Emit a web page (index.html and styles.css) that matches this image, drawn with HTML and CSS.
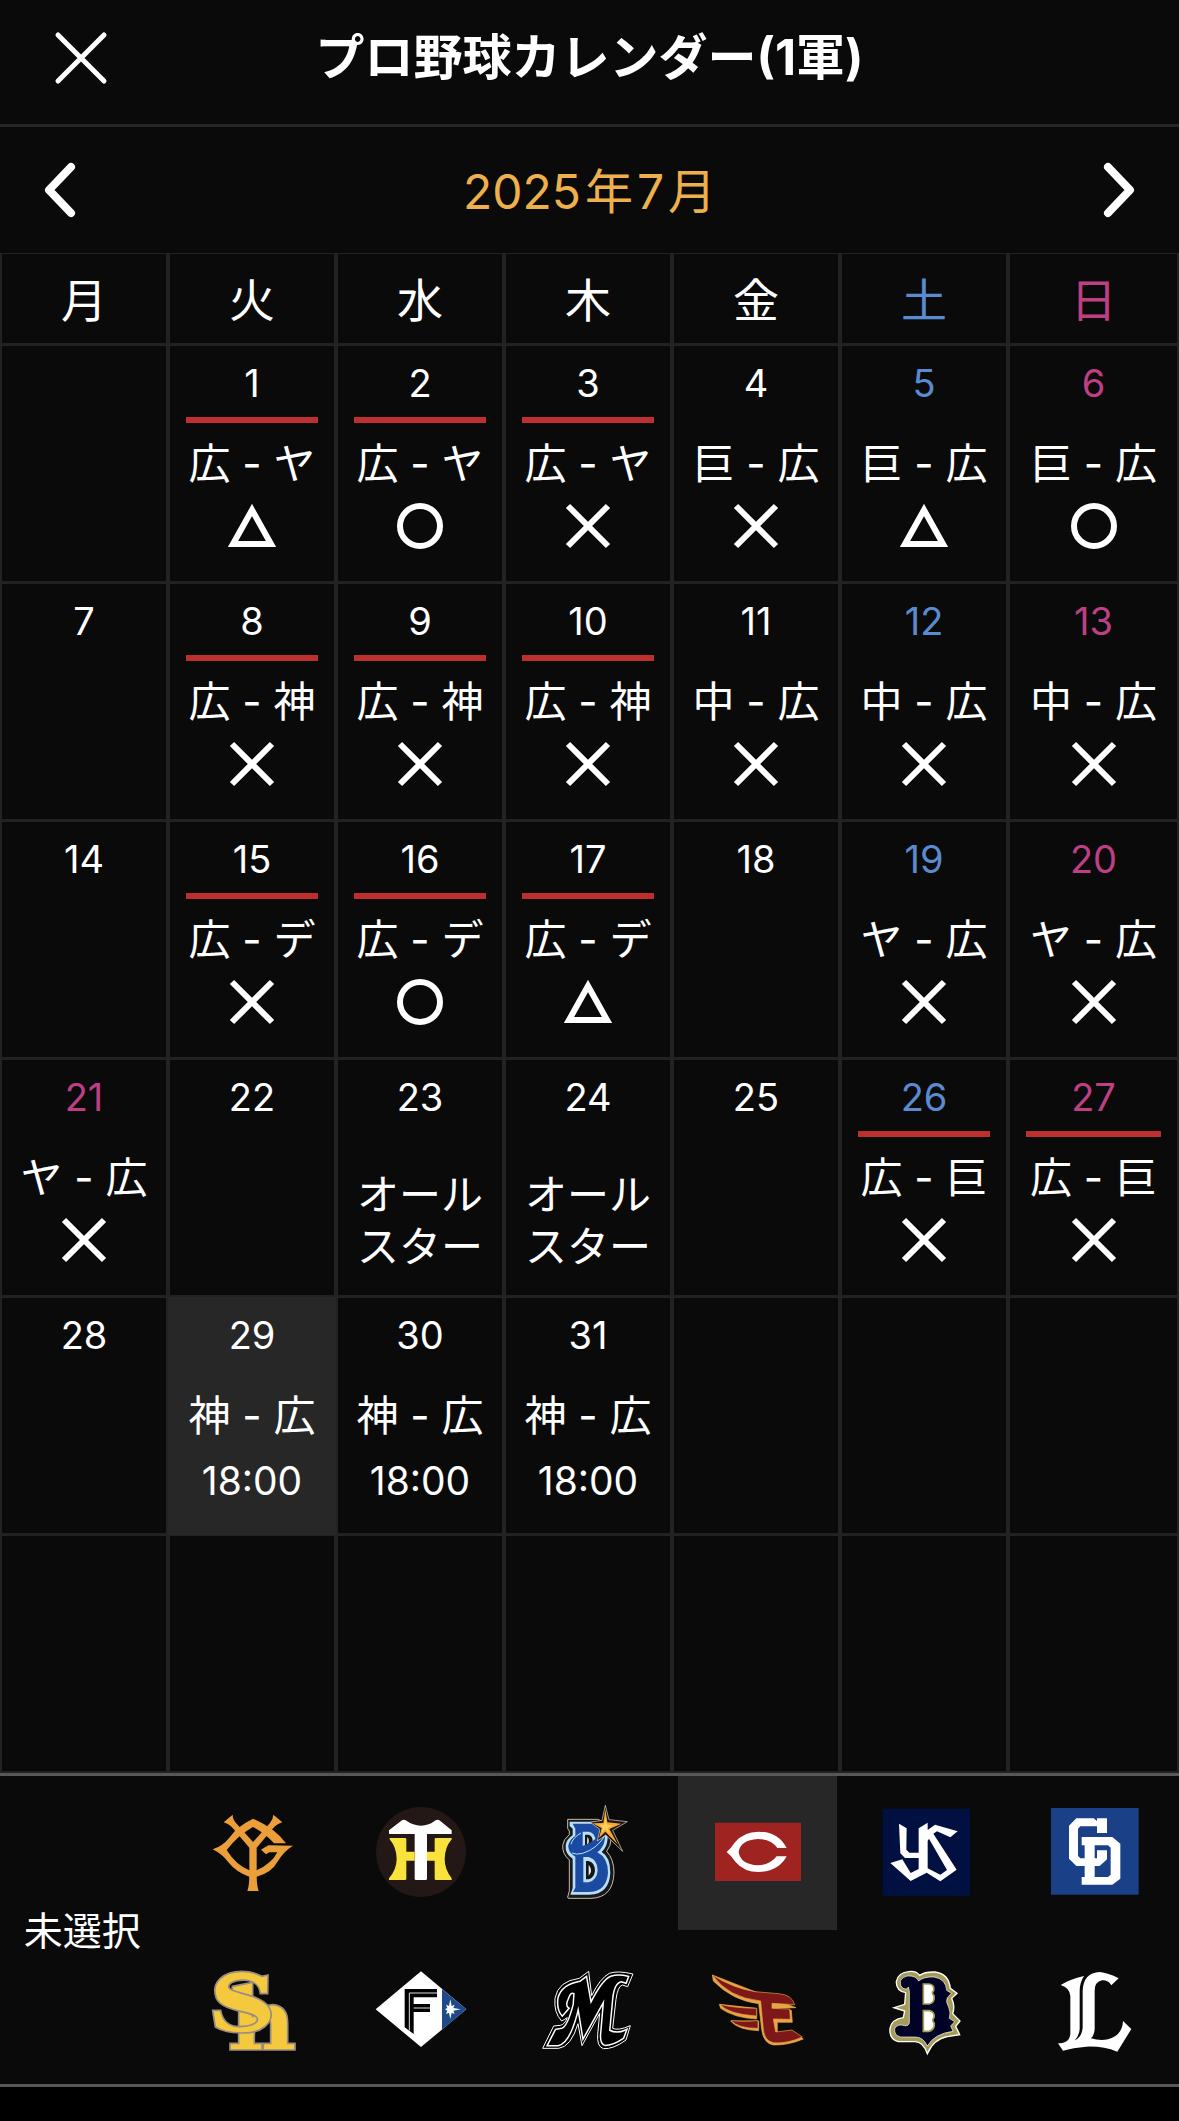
FILE: index.html
```html
<!DOCTYPE html>
<html lang="ja">
<head>
  <meta charset="UTF-8" />
  <meta name="viewport" content="width=device-width, initial-scale=1.0" />
  <title>プロ野球カレンダー(1軍)</title>
  <link rel="stylesheet" href="styles.css">
</head>
<body>
  <!-- result marks used in the calendar -->
  <svg class="defs" aria-hidden="true">
    <symbol id="win" viewBox="0 0 48 48"><circle cx="24" cy="24" r="20" /></symbol>
    <symbol id="lose" viewBox="0 0 48 48"><path d="M4 4L44 44M44 4L4 44" /></symbol>
    <symbol id="draw" viewBox="0 0 48 48"><path d="M24 8L43 42H5Z" /></symbol>
  </svg>

  <header class="header">
    <button class="icon-btn" type="button" aria-label="閉じる">
      <svg width="56" height="56" viewBox="0 0 56 56"><path d="M5 5L51 51M51 5L5 51" stroke-width="5" /></svg>
    </button>
    <h1>プロ野球カレンダー(1軍)</h1>
  </header>

  <nav class="month-nav">
    <button class="icon-btn" type="button" aria-label="前の月">
      <svg width="40" height="56" viewBox="0 0 40 56"><path d="M31 5L9 28L31 51" stroke-width="8" /></svg>
    </button>
    <h2><span>2025</span><span>年</span><span>7</span><span>月</span></h2>
    <button class="icon-btn" type="button" aria-label="次の月">
      <svg width="40" height="56" viewBox="0 0 40 56"><path d="M9 5L31 28L9 51" stroke-width="8" /></svg>
    </button>
  </nav>

  <main>
    <table class="calendar">
      <thead>
        <tr>
          <th>月</th><th>火</th><th>水</th><th>木</th><th>金</th>
          <th class="sat">土</th><th class="sun">日</th>
        </tr>
      </thead>
      <tbody>
        <tr>
          <td></td>
          <td><div class="date home">1</div><div class="match">広 - ヤ</div><svg class="mark"><use href="#draw" /></svg></td>
          <td><div class="date home">2</div><div class="match">広 - ヤ</div><svg class="mark"><use href="#win" /></svg></td>
          <td><div class="date home">3</div><div class="match">広 - ヤ</div><svg class="mark"><use href="#lose" /></svg></td>
          <td><div class="date">4</div><div class="match">巨 - 広</div><svg class="mark"><use href="#lose" /></svg></td>
          <td><div class="date sat">5</div><div class="match">巨 - 広</div><svg class="mark"><use href="#draw" /></svg></td>
          <td><div class="date sun">6</div><div class="match">巨 - 広</div><svg class="mark"><use href="#win" /></svg></td>
        </tr>
        <tr>
          <td><div class="date">7</div></td>
          <td><div class="date home">8</div><div class="match">広 - 神</div><svg class="mark"><use href="#lose" /></svg></td>
          <td><div class="date home">9</div><div class="match">広 - 神</div><svg class="mark"><use href="#lose" /></svg></td>
          <td><div class="date home">10</div><div class="match">広 - 神</div><svg class="mark"><use href="#lose" /></svg></td>
          <td><div class="date">11</div><div class="match">中 - 広</div><svg class="mark"><use href="#lose" /></svg></td>
          <td><div class="date sat">12</div><div class="match">中 - 広</div><svg class="mark"><use href="#lose" /></svg></td>
          <td><div class="date sun">13</div><div class="match">中 - 広</div><svg class="mark"><use href="#lose" /></svg></td>
        </tr>
        <tr>
          <td><div class="date">14</div></td>
          <td><div class="date home">15</div><div class="match">広 - デ</div><svg class="mark"><use href="#lose" /></svg></td>
          <td><div class="date home">16</div><div class="match">広 - デ</div><svg class="mark"><use href="#win" /></svg></td>
          <td><div class="date home">17</div><div class="match">広 - デ</div><svg class="mark"><use href="#draw" /></svg></td>
          <td><div class="date">18</div></td>
          <td><div class="date sat">19</div><div class="match">ヤ - 広</div><svg class="mark"><use href="#lose" /></svg></td>
          <td><div class="date sun">20</div><div class="match">ヤ - 広</div><svg class="mark"><use href="#lose" /></svg></td>
        </tr>
        <tr>
          <td><div class="date sun">21</div><div class="match">ヤ - 広</div><svg class="mark"><use href="#lose" /></svg></td>
          <td><div class="date">22</div></td>
          <td><div class="date">23</div><div class="event">オール<br>スター</div></td>
          <td><div class="date">24</div><div class="event">オール<br>スター</div></td>
          <td><div class="date">25</div></td>
          <td><div class="date sat home">26</div><div class="match">広 - 巨</div><svg class="mark"><use href="#lose" /></svg></td>
          <td><div class="date sun home">27</div><div class="match">広 - 巨</div><svg class="mark"><use href="#lose" /></svg></td>
        </tr>
        <tr>
          <td><div class="date">28</div></td>
          <td class="today"><div class="date">29</div><div class="match">神 - 広</div><div class="time">18:00</div></td>
          <td><div class="date">30</div><div class="match">神 - 広</div><div class="time">18:00</div></td>
          <td><div class="date">31</div><div class="match">神 - 広</div><div class="time">18:00</div></td>
          <td></td>
          <td></td>
          <td></td>
        </tr>
        <tr>
          <td></td><td></td><td></td><td></td><td></td><td></td><td></td>
        </tr>
      </tbody>
    </table>
  </main>

  <footer class="teams">
    <button class="none" type="button">未選択</button>

    <button type="button" aria-label="巨人">
      <svg viewBox="24 51 270 270" fill="#eb9f3b">
        <path d="M71 94L98 71Q98 85 108 96L159 153L210 96Q219 85 220 71L247 94Q232 98 218 113L170 170V250Q170 285 176 300H142Q148 285 148 250V170L100 113Q86 98 71 94Z" />
        <path d="M159 83Q110 107 88 140Q68 165 38 175Q68 190 85 214Q110 245 148 257H170Q215 245 232 213Q252 180 279 164L205 163L183 176L198 190L208 184H232Q215 218 170 238H148Q108 222 80 177Q115 132 159 108Q195 127 222 157H258Q225 112 159 83Z" />
      </svg>
    </button>
    <button type="button" aria-label="阪神">
      <svg viewBox="19 51 270 270">
        <circle cx="154" cy="183" r="135" fill="#231815" />
        <path fill="#fff" d="M108 88Q130 104 154 104Q178 104 198 88Q205 84 212 90L246 118V129H172V263Q172 267 168 267H139Q135 267 135 263V129H58V118L94 90Q101 84 108 88Z" />
        <path fill="#f9e23c" d="M60 141H106Q110 141 110 145V182H135V209H110V263Q110 267 106 267H58V262Q81 235 81 204Q81 170 60 145ZM246 141H199Q195 141 195 145V182H172V209H195V263Q195 267 199 267H246V262Q225 235 225 204Q225 170 246 145Z" />
      </svg>
    </button>
    <button type="button" aria-label="DeNA">
      <svg viewBox="44 51 270 270">
        <path fill="#191919" stroke="#e9dccb" stroke-width="2.5" d="M115 85H205Q245 95 246 140Q245 165 232 181Q254 205 254 245Q252 320 185 322H119Q115 322 115 318L120 300V207Q99 190 100 163Q102 145 120 131V120L115 113Z" />
        <path fill="#b9dff8" d="M121 92H195Q236 98 235 142Q233 170 217 183Q243 198 243 245Q240 309 180 311H123L130 292V203Q107 188 109 164Q111 145 130 133V113L121 105Z" />
        <path fill="#1a4ba0" d="M130 98H193Q227 104 227 142Q224 170 204 184Q236 200 236 245Q232 302 178 303H131L138 290V197Q116 184 117 164Q120 145 138 137V113Z" />
        <path fill="#b9dff8" d="M160 122H178Q199 126 198 150Q196 172 178 178H160ZM162 198H178Q205 205 205 238Q203 268 178 274H162Z" />
        <path fill="#151515" d="M167 131H178Q191 135 190 152Q187 166 175 169H167ZM170 210H178Q197 215 197 239Q195 260 178 265H170Z" />
        <path fill="#e5eef4" d="M174 137Q184 150 173 164ZM178 221Q192 239 178 254Z" />
        <path fill="#1a4ba0" d="M118 166Q124 190 150 188Q205 180 228 120Q185 160 150 168Q130 170 145 130Q119 145 118 166Z" />
        <path fill="none" stroke="#b9dff8" stroke-width="3" d="M128 186Q140 192 160 187Q205 173 229 130M125 160Q130 140 155 126" />
        <path fill="#1b130c" stroke="#f0dfc9" stroke-width="2" d="M228 43L239 86L294 92L250 118L280 181L229 132L204 150L212 115L183 94L218 88Z" />
        <path fill="#f6a92e" d="M228 55L234 94L276 98L240 114L265 160L228 122L209 141L217 112L190 97L222 96Z" />
        <path fill="#fdd15b" d="M228 78L232 101L250 104L235 111L240 126L227 115L216 126L221 109L208 100L224 101Z" />
      </svg>
    </button>
    <button class="selected" type="button" aria-label="広島" aria-pressed="true">
      <svg viewBox="129 111 270 270">
        <path fill="#9f2321" d="M135 155H393V330H135Z" />
        <path fill="#fff" d="M170 243Q183 232 195 214Q220 182 266 182Q325 183 350 231H322Q303 204 264 204Q211 207 206 243Q211 280 264 283Q301 281 320 256H350Q325 302 266 303Q222 303 196 272Q183 253 170 243Z" />
      </svg>
    </button>
    <button type="button" aria-label="ヤクルト">
      <svg viewBox="63 51 270 270">
        <path fill="#001040" d="M68 53H330V314H68Z" />
        <path fill="#fff" fill-rule="evenodd" d="M117 98L140 112L139 176L148 185H176V112L203 95V117L225 101L293 121L271 139L231 121L220 128L290 236L241 271L200 245L152 270L91 216L127 205L152 246L176 234V201H135L121 187ZM203 150V232L241 251L261 237L207 143Z" />
      </svg>
    </button>
    <button type="button" aria-label="中日">
      <svg viewBox="88 51 270 270">
        <path fill="#1a4088" d="M94 51H357V311H94Z" />
        <path fill="#fff" d="M170 82H222L232 90V82H262V126H232V106H182L175 113V195L182 202H232V178H262V205L240 225H170L148 203V104Z" />
        <path fill="#fff" fill-rule="evenodd" d="M186 138H278L302 158V263L278 281H186V258H195V163H186ZM225 163V258H265L273 251V170L265 163Z" />
      </svg>
    </button>

    <button type="button" aria-label="ソフトバンク">
      <svg viewBox="24 513 270 270" fill="#f5c93d" stroke="#998c82" stroke-width="5">
        <path d="M97 586L158 574V675Q185 642 218 641Q263 645 263 695V757H285V777H190V757H212V700Q212 675 195 672Q160 675 163 757H186V777H90V757H116V607L97 600Z" />
        <path d="M204 552L203 608H181C178 579 155 565 120 568C94 570 80 583 89 593C103 608 200 612 212 660C221 694 187 728 125 726C88 726 62 718 46 708L38 658H62C68 692 88 706 117 707C151 706 176 697 172 682C164 660 69 664 49 622C31 574 70 541 125 541C155 541 175 550 186 556Z" />
      </svg>
    </button>
    <button type="button" aria-label="日本ハム">
      <svg viewBox="19 513 270 270">
        <path fill="#fff" d="M18 655L154 541L290 655L154 768Z" />
        <path fill="#1f4a8a" d="M217 594L290 655L217 716Z" />
        <path fill="#000" d="M105 594H202V619H132V639H181V663H132V729L105 709Z" />
        <path fill="none" stroke="#ddd" stroke-width="3" d="M202 606H119V718M132 651H181" />
        <path fill="#fff" d="M242 625L246 645L255 641L251 651L273 655L251 659L255 669L246 665L242 684L238 665L229 669L233 659L226 655L233 651L229 641L238 645Z" />
      </svg>
    </button>
    <button type="button" aria-label="ロッテ">
      <svg viewBox="44 513 270 270" fill="#000" stroke="#fff" stroke-linejoin="miter">
        <path stroke-width="3" d="M40 772L73 705L93 703Q106 701 114 680L97 690Q73 665 77 622Q86 570 150 562L178 541L187 614Q212 562 240 547Q265 538 311 549L295 587L279 582Q265 586 260 625L250 712Q266 720 303 704L290 747Q252 775 222 773Q202 766 205 730L211 667L158 764L146 698Q125 768 88 772Z" />
        <path class="outlined" stroke-width="9" d="M57 762L80 717L98 714Q116 709 134 640L136 606Q122 600 116 620Q104 645 116 652L99 672Q84 655 88 622Q98 582 153 573L170 560L184 640Q219 569 245 558Q268 550 295 558L289 574L276 570Q253 574 248 622L239 719Q262 732 289 719L281 740Q250 761 227 761Q214 757 216 730L225 625L162 738L147 645Q123 754 86 762Z" />
      </svg>
    </button>
    <button type="button" aria-label="楽天">
      <svg viewBox="129 573 270 270" fill="#7d1718" stroke="#e8a545" stroke-width="2" stroke-linejoin="round">
        <path fill="#e8a545" d="M127 612L130 630Q190 690 266 698L275 775Q280 817 310 822Q355 823 400 804L370 783L322 788V754H367L364 718L308 712L378 710Z" />
        <path d="M127 612Q190 652 255 662L325 668Q366 671 374 701L306 697V712L359 714L361 745L310 744L317 783L366 777L397 798Q350 819 310 815Q283 810 280 775L272 690Q175 680 127 612Z" />
        <path fill="#e8a545" d="M148 700L152 712Q190 740 260 744V712ZM182 750Q205 777 266 779V750Z" />
        <path d="M150 700Q190 711 260 712V735Q175 730 150 700ZM183 749Q220 752 264 749V772Q205 772 183 749Z" />
      </svg>
    </button>
    <button type="button" aria-label="オリックス">
      <svg viewBox="63 513 270 270">
        <path fill="#a69c58" stroke="#fff" stroke-width="4" d="M145 542Q168 538 179 553Q195 542 225 543Q266 548 271 592L291 607L275 622Q286 646 278 668L300 690L287 706L299 731L262 737Q222 744 202 788Q190 753 165 752H115Q87 745 90 712Q95 685 130 680L134 660L102 650L134 640L137 605Q108 600 109 572Q113 546 145 542Z" />
        <path fill="#000325" stroke="#fff" stroke-width="2" d="M142 555Q168 553 176 570Q192 556 222 558Q258 564 260 598L274 607L262 620Q256 632 266 648Q273 665 268 682L284 692L272 705L279 721Q223 728 202 765Q190 738 165 738H122Q102 734 104 713Q112 697 134 704Q146 706 148 695V600L145 588Q142 597 129 592Q119 585 121 569Q129 557 142 555Z" />
        <path fill="#fff" stroke="#a69c58" stroke-width="5" d="M190 579H207Q224 581 221 599Q213 606 222 614Q225 635 208 639H190ZM190 659H208Q225 663 222 680Q214 687 223 697Q224 718 206 721H190Z" />
      </svg>
    </button>
    <button type="button" aria-label="西武">
      <svg viewBox="88 513 270 270" fill="#fff">
        <path d="M123 582Q150 565 193 555Q180 575 180 600V715Q178 735 165 748Q186 740 189 710V600Q191 545 240 543Q265 545 297 562L275 583Q265 566 247 568Q225 572 225 600V715Q223 735 214 742Q240 750 265 745Q308 734 310 690L335 714L293 782Q250 765 200 767Q160 770 130 779L115 757Q150 757 152 728V615Q150 590 123 582Z" />
      </svg>
    </button>
  </footer>
</body>
</html>
```

FILE: styles.css
```css
* {
  box-sizing: border-box;
}
body {
  margin: 0;
  background: #000;
  color: #fff;
  font-family: Inter, "Noto Sans CJK JP", sans-serif;
}
button {
  padding: 0;
  border: 0;
  background: none;
  color: inherit;
  font: inherit;
  cursor: pointer;
}
svg {
  display: block;
}
h1, h2 {
  margin: 0;
}
.defs {
  display: none;
}

/* header */
.header,
.month-nav {
  display: grid;
  align-items: center;
  height: 127px;
  background: #0a0a0a;
}
.header {
  grid-template-columns: 56px 1fr 56px;
  padding: 0 53px 8px;
  border-bottom: 3px solid #262626;
}
.header h1 {
  font-size: 49px;
  line-height: 56px;
  text-align: center;
  white-space: nowrap;
}
.icon-btn path {
  fill: none;
  stroke: #fff;
  stroke-linecap: round;
  stroke-linejoin: round;
}
.month-nav {
  grid-template-columns: 40px 1fr 40px;
  height: 126px;
  padding: 0 40px;
}
.month-nav h2 {
  display: flex;
  justify-content: center;
  gap: 4px;
  padding-top: 4px;
  color: #edb04c;
  font-size: 48px;
  font-weight: 400;
  line-height: 56px;
}

/* calendar */
.calendar {
  width: 100%;
  table-layout: fixed;
  border-collapse: separate;
  border-spacing: 0;
  background: #0a0a0a;
}
.calendar th,
.calendar td {
  border: 2px solid #222;
  border-top-width: 1px;
  padding: 0;
}
.calendar th {
  height: 92px;
  padding-top: 2px;
  font-size: 46px;
  font-weight: 400;
  line-height: 52px;
}
.calendar th:not(:last-child) {
  width: 14.25%;
}
.calendar td {
  height: 238px;
  padding: 15px 16px 0;
  vertical-align: top;
  text-align: center;
  white-space: nowrap;
}
.calendar .sat {
  color: #5a8ad0;
}
.calendar .sun {
  color: #bf3f84;
}
.calendar .today {
  background: #272727;
  border-color: #272727;
}
.date {
  padding-bottom: 12px;
  border-bottom: 6px solid transparent;
  font-size: 38px;
  line-height: 44px;
}
.date.home {
  border-color: #be2f30;
}
.match {
  margin: 19px -8px 0;
  font-size: 42px;
  line-height: 44px;
}
.mark {
  width: 48px;
  height: 48px;
  margin: 16px auto 0;
  fill: none;
  stroke: #fff;
  stroke-width: 6;
}
.time {
  margin-top: 21px;
  font-size: 39px;
  line-height: 44px;
}
.event {
  margin-top: 32px;
  font-size: 42px;
  line-height: 52px;
}

/* team picker */
.teams {
  display: grid;
  grid-template-columns: repeat(7, 1fr);
  grid-auto-rows: 154px;
  column-gap: 9px;
  padding: 0 5px;
  border-top: 3px solid #585858;
  border-bottom: 3px solid #585858;
  background: #0a0a0a;
}
.teams button {
  display: flex;
  align-items: center;
  justify-content: center;
}
.teams svg {
  width: 90px;
  height: 90px;
  overflow: visible;
}
.teams .selected {
  background: #272727;
}
.teams .none {
  grid-row: span 2;
  padding: 0 5px 4px 0;
  font-size: 39px;
}
.outlined {
  paint-order: stroke;
}
```
